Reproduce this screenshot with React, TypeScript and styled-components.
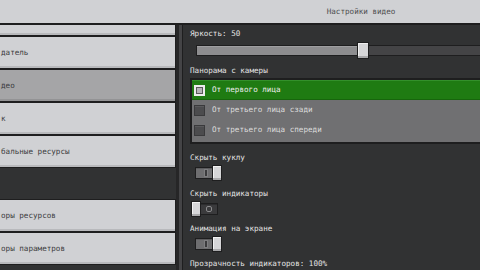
import React from 'react';
import styled, { createGlobalStyle } from 'styled-components';

const GlobalStyle = createGlobalStyle`
  html, body {
    margin: 0;
    padding: 0;
    background: #313233;
    overflow: hidden;
  }
  body {
    font-family: "DejaVu Sans Mono", "Liberation Mono", monospace;
    font-size: 7.6px;
  }
`;

const Screen = styled.div`
  width: 480px;
  height: 270px;
  display: flex;
  flex-direction: column;
  overflow: hidden;
  background: #313233;
`;

const Header = styled.div`
  height: 23px;
  flex-shrink: 0;
  background: #d0d1d4;
  border-bottom: 2px solid #1e1e1f;
  display: flex;
  align-items: center;
  justify-content: center;
  padding-left: 242px;
`;

const Title = styled.span`
  color: #4e4e50;
  line-height: 10px;
`;

const Body = styled.div`
  flex: 1;
  display: flex;
  overflow: hidden;
`;

const Sidebar = styled.div`
  width: 176px;
  flex-shrink: 0;
  display: flex;
  flex-direction: column;
  overflow: hidden;
  background: #313233;
`;

const NavList = styled.div<{ $offset?: number }>`
  display: flex;
  flex-direction: column;
  margin-top: ${p => p.$offset ?? 0}px;
`;

const NavButton = styled.div<{ $active?: boolean }>`
  height: 33px;
  box-sizing: border-box;
  border: 1px solid #1e1e1f;
  border-left: none;
  background: ${p => (p.$active ? '#a5a5a7' : '#d0d1d4')};
  box-shadow: inset 0 -2px 0 ${p => (p.$active ? '#939395' : '#b8b9bc')};
  color: #3c3c3e;
  display: flex;
  align-items: center;
  padding-left: 1px;
  overflow: hidden;
  white-space: nowrap;
  line-height: 10px;
`;

const Divider = styled.div`
  width: 3px;
  flex-shrink: 0;
  background: #444446;
  border-left: 3px solid #262627;
  border-right: 1px solid #1e1e1f;
`;

const Panel = styled.div`
  flex: 1;
  display: flex;
  flex-direction: column;
  padding: 4px 0 0 7px;
  overflow: hidden;
  background: #313233;
`;

const Label = styled.div<{ $gap?: number }>`
  color: #e4e4e4;
  line-height: 10px;
  height: 10px;
  white-space: nowrap;
  margin-top: ${p => p.$gap ?? 0}px;
`;

const SliderWrap = styled.div`
  position: relative;
  height: 17px;
  margin: 3px -50px 0 6px;
  display: flex;
  align-items: center;
`;

const Track = styled.div`
  flex: 1;
  height: 11px;
  box-sizing: border-box;
  border: 1px solid #1e1e1f;
  background: #444446;
  display: flex;
`;

const Fill = styled.div`
  height: 100%;
  background: #8d8d8f;
  box-shadow: inset 0 1px 0 #9f9fa1;
`;

const Thumb = styled.div`
  position: absolute;
  top: 0;
  width: 12px;
  height: 17px;
  box-sizing: border-box;
  margin-left: -6px;
  border: 1px solid #1e1e1f;
  background: #d6d6d8;
  box-shadow: inset 0 -2px 0 #a9a9ab, inset 1px 1px 0 #f0f0f0;
`;

const Dropdown = styled.div`
  margin: 2px -10px 0 0;
  border: 2px solid #1e1e1f;
  background: #707072;
  padding-bottom: 2px;
  display: flex;
  flex-direction: column;
`;

const Option = styled.div<{ $selected?: boolean }>`
  height: 20px;
  display: flex;
  align-items: center;
  gap: 7px;
  padding-left: 2px;
  background: ${p => (p.$selected ? '#1f7b12' : '#707072')};
  box-shadow: ${p => (p.$selected ? 'inset 0 1px 0 #33902a, inset 0 -1px 0 #17660c' : 'none')};
  color: ${p => (p.$selected ? '#eeeeee' : '#dcdcdc')};
  white-space: nowrap;
  line-height: 10px;
`;

const Radio = styled.div<{ $checked?: boolean }>`
  width: 11px;
  height: 11px;
  box-sizing: border-box;
  flex-shrink: 0;
  border: ${p => (p.$checked ? '2px solid #ececec' : '1px solid #3a3a3c')};
  background: ${p => (p.$checked ? '#b4b4b6' : '#4c4c4e')};
  box-shadow: ${p => (p.$checked ? 'inset 0 0 0 1px #5a5a5a' : 'inset 0 1px 0 #5a5a5c')};
`;

const ToggleBox = styled.div`
  position: relative;
  width: 31px;
  height: 16px;
  margin: 2px 0 0 1px;
  display: flex;
  align-items: center;
`;

const ToggleTrack = styled.div<{ $on?: boolean }>`
  margin-left: 4px;
  width: 23px;
  height: 12px;
  box-sizing: border-box;
  border: 1px solid #1e1e1f;
  background: ${p => (p.$on ? '#6e6e70' : '#3a3a3c')};
  box-shadow: inset 0 1px 0 ${p => (p.$on ? '#5c5c5e' : '#2c2c2e')};
`;

const OnMark = styled.div`
  position: absolute;
  left: 14px;
  top: 5px;
  width: 2px;
  height: 6px;
  background: #3b3b3d;
  box-shadow: 0 0 0 1px #7f7f81;
`;

const OffMark = styled.div`
  position: absolute;
  left: 15px;
  top: 5px;
  width: 6px;
  height: 6px;
  box-sizing: border-box;
  border: 1px solid #8a8a8c;
  border-radius: 2px;
`;

const Knob = styled.div<{ $on?: boolean }>`
  position: absolute;
  top: 0;
  left: ${p => (p.$on ? 21 : 0)}px;
  width: 10px;
  height: 16px;
  box-sizing: border-box;
  border: 1px solid #1e1e1f;
  background: #d6d6d8;
  box-shadow: inset 0 -2px 0 #a9a9ab, inset 1px 1px 0 #f2f2f2;
`;

const Toggle = ({ on }: { on: boolean }) => (
  <ToggleBox>
    <ToggleTrack $on={on} />
    {on ? <OnMark /> : <OffMark />}
    <Knob $on={on} />
  </ToggleBox>
);

// the screen is cropped on the left, so only the tail of each label is visible
const navTop = [
  { label: '' },
  { label: 'датель' },
  { label: 'део', active: true },
  { label: 'к' },
  { label: 'бальные ресурсы' },
];

const navBottom = [{ label: 'оры ресурсов' }, { label: 'оры параметров' }];

const cameraOptions = ['От первого лица', 'От третьего лица сзади', 'От третьего лица спереди'];

export default function App() {
  const brightness = 50;
  return (
    <>
      <GlobalStyle />
      <Screen>
        <Header>
          <Title>Настройки видео</Title>
        </Header>
        <Body>
          <Sidebar>
            <NavList $offset={-22}>
              {navTop.map((item, i) => (
                <NavButton key={i} $active={item.active}>
                  {item.label}
                </NavButton>
              ))}
            </NavList>
            <NavList $offset={31}>
              {navBottom.map(item => (
                <NavButton key={item.label}>{item.label}</NavButton>
              ))}
            </NavList>
          </Sidebar>
          <Divider />
          <Panel>
            <Label>Яркость: {brightness}</Label>
            <SliderWrap>
              <Track>
                <Fill style={{ width: `${brightness}%` }} />
              </Track>
              <Thumb style={{ left: `${brightness}%` }} />
            </SliderWrap>
            <Label $gap={7}>Панорама с камеры</Label>
            <Dropdown>
              {cameraOptions.map((opt, i) => (
                <Option key={opt} $selected={i === 0}>
                  <Radio $checked={i === 0} />
                  {opt}
                </Option>
              ))}
            </Dropdown>
            <Label $gap={9}>Скрыть куклу</Label>
            <Toggle on />
            <Label $gap={8}>Скрыть индикаторы</Label>
            <Toggle on={false} />
            <Label $gap={7}>Анимация на экране</Label>
            <Toggle on />
            <Label $gap={7}>Прозрачность индикаторов: 100%</Label>
          </Panel>
        </Body>
      </Screen>
    </>
  );
}
